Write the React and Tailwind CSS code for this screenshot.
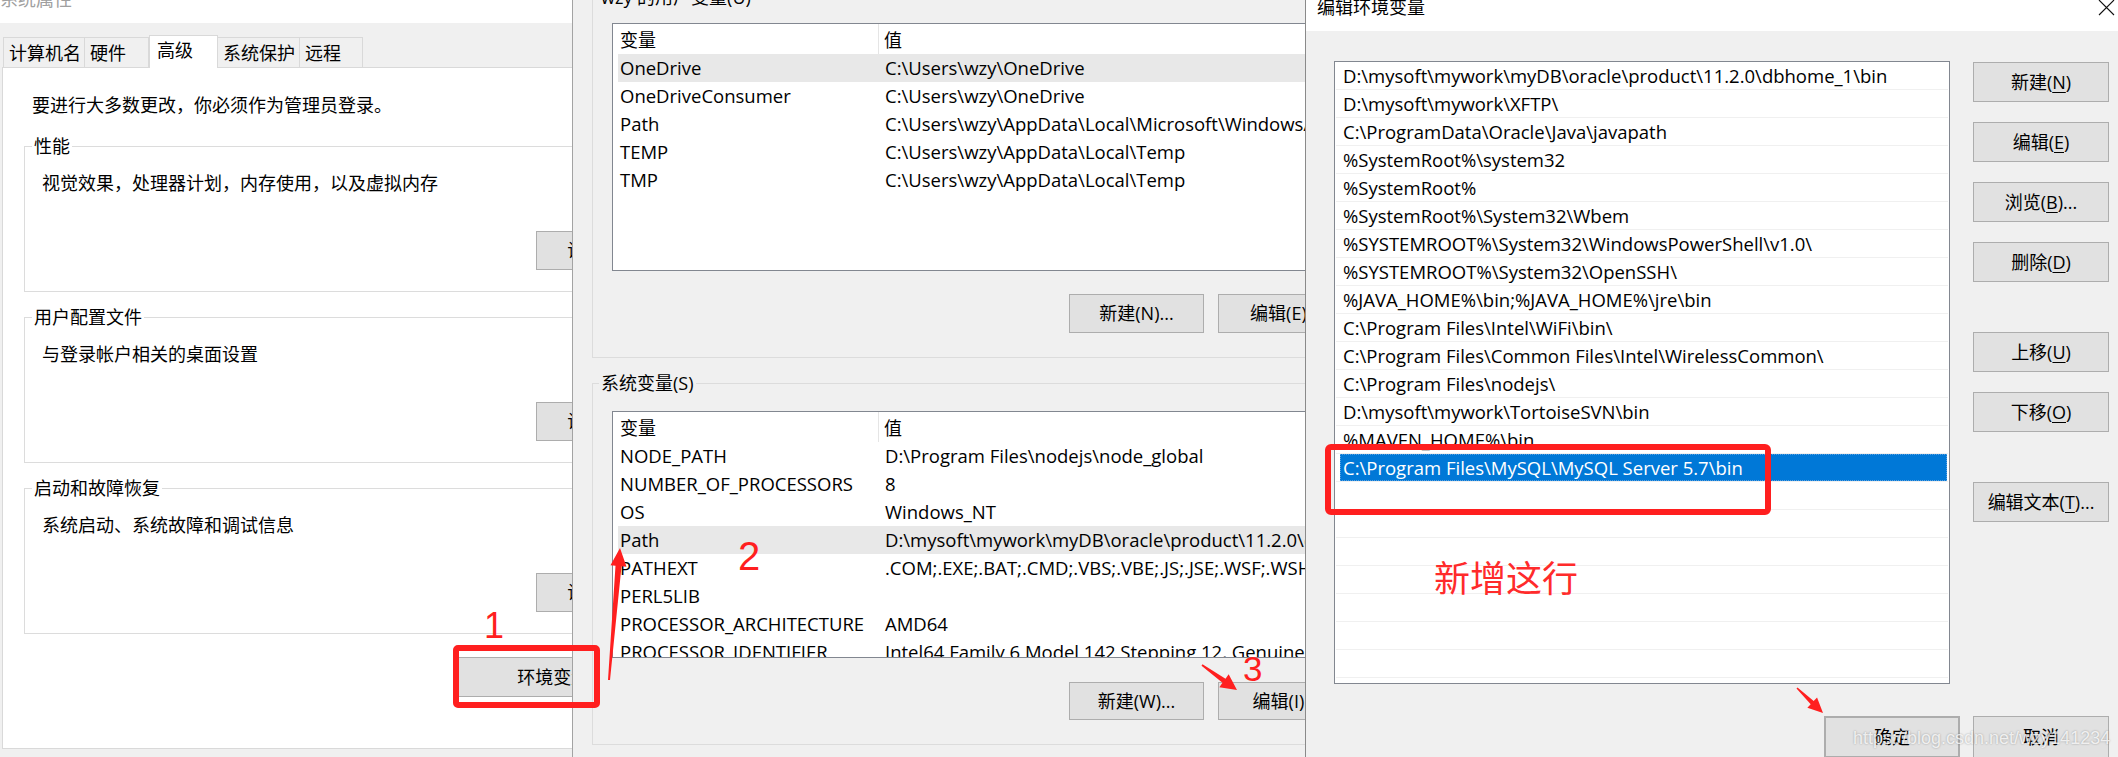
import React from 'react';

const sans = "font-['Open_Sans','Noto_Sans_CJK_SC',sans-serif]";

const Btn = ({ children, className = '' }) => (
  <div
    className={`flex items-center justify-center shrink-0 bg-[#e1e1e1] border border-[#adadad] text-[18px] whitespace-nowrap ${className}`}
  >
    {children}
  </div>
);

const U = ({ children }) => <span className="underline underline-offset-[3px]">{children}</span>;

const Group = ({ title, text, className = '' }) => (
  <fieldset className={`ml-[21px] h-[158px] w-[700px] border border-[#dcdcdc] ${className}`}>
    <legend className="ml-[7px] px-[2px] leading-[24px]">{title}</legend>
    <div className="mt-[13px] pl-[17px] leading-[24px]">{text}</div>
    <Btn className="mt-[36px] ml-[511px] w-[133px] h-[39px]">设置(S)...</Btn>
  </fieldset>
);

function SystemProperties() {
  const tabs = [
    { label: '计算机名', w: 'w-[82px]' },
    { label: '硬件', w: 'w-[65px]' },
    { label: '高级', w: 'w-[69px]', active: true },
    { label: '系统保护', w: 'w-[83px]' },
    { label: '远程', w: 'w-[64px]' },
  ];
  return (
    <div className="w-[572px] shrink-0 h-full overflow-hidden flex flex-col">
      <div className="h-[23px] shrink-0 bg-white overflow-hidden">
        <div className="-mt-[13px] leading-[24px] text-[#a0a0a0]">系统属性</div>
      </div>
      <div className="flex items-end h-[32px] shrink-0 mt-[12px] pl-[3px] relative z-10">
        {tabs.map((t) =>
          t.active ? (
            <div
              key={t.label}
              className={`${t.w} h-[33px] -mb-px bg-white border border-b-0 border-[#d9d9d9] pl-[7px] pt-[2px] leading-[24px]`}
            >
              {t.label}
            </div>
          ) : (
            <div
              key={t.label}
              className={`${t.w} h-[30px] border border-b-0 border-[#d9d9d9] -ml-px first:ml-0 pl-[5px] pt-[3px] leading-[24px]`}
            >
              {t.label}
            </div>
          )
        )}
      </div>
      <div className="ml-[2px] w-[640px] h-[682px] shrink-0 bg-white border border-[#d9d9d9]">
        <div className="pt-[25px] pl-[29px] leading-[24px]">要进行大多数更改，你必须作为管理员登录。</div>
        <Group className="mt-[17px]" title="性能" text="视觉效果，处理器计划，内存使用，以及虚拟内存" />
        <Group className="mt-[13px]" title="用户配置文件" text="与登录帐户相关的桌面设置" />
        <Group className="mt-[13px]" title="启动和故障恢复" text="系统启动、系统故障和调试信息" />
        <Btn className="mt-[23px] ml-[454px] w-[231px] h-[40px]">环境变量(N)...</Btn>
      </div>
    </div>
  );
}

const ListView = ({ rows, hl, className = '' }) => (
  <div className={`bg-white border border-[#828790] overflow-hidden w-[760px] shrink-0 ${className}`}>
    <div className="flex h-[30px] items-center">
      <div className="w-[266px] h-full pl-[7px] pt-[3px] flex items-center border-r border-[#e5e5e5]">变量</div>
      <div className="pl-[5px] pt-[3px]">值</div>
    </div>
    {rows.map(([k, v], i) => (
      <div
        key={k}
        className={`flex h-[28px] items-center ml-[5px] pl-[2px] text-[18.5px] whitespace-nowrap ${
          i === hl ? 'bg-[#e8e8e8]' : ''
        }`}
      >
        <div className="w-[265px] shrink-0">{k}</div>
        <div>{v}</div>
      </div>
    ))}
  </div>
);

function EnvVars() {
  const userVars = [
    ['OneDrive', 'C:\\Users\\wzy\\OneDrive'],
    ['OneDriveConsumer', 'C:\\Users\\wzy\\OneDrive'],
    ['Path', 'C:\\Users\\wzy\\AppData\\Local\\Microsoft\\WindowsApps;'],
    ['TEMP', 'C:\\Users\\wzy\\AppData\\Local\\Temp'],
    ['TMP', 'C:\\Users\\wzy\\AppData\\Local\\Temp'],
  ];
  const sysVars = [
    ['NODE_PATH', 'D:\\Program Files\\nodejs\\node_global'],
    ['NUMBER_OF_PROCESSORS', '8'],
    ['OS', 'Windows_NT'],
    ['Path', 'D:\\mysoft\\mywork\\myDB\\oracle\\product\\11.2.0\\dbhome_1\\bin;'],
    ['PATHEXT', '.COM;.EXE;.BAT;.CMD;.VBS;.VBE;.JS;.JSE;.WSF;.WSH;.MSC'],
    ['PERL5LIB', ''],
    ['PROCESSOR_ARCHITECTURE', 'AMD64'],
    ['PROCESSOR_IDENTIFIER', 'Intel64 Family 6 Model 142 Stepping 12, GenuineIntel'],
  ];
  return (
    <div className="w-[733px] shrink-0 h-full overflow-hidden border-l border-[#a3a3a3]">
      <fieldset className="-mt-[15px] ml-[19px] w-[800px] h-[373px] border border-[#dcdcdc]">
        <legend className="ml-[6px] px-[2px] leading-[24px]">wzy 的用户变量(U)</legend>
        <ListView rows={userVars} hl={0} className="mt-[14px] ml-[19px] h-[248px]" />
        <div className="flex gap-[14px] mt-[23px] ml-[476px]">
          <Btn className="w-[135px] h-[39px]">新建(N)...</Btn>
          <Btn className="w-[135px] h-[39px]">编辑(E)...</Btn>
        </div>
      </fieldset>
      <fieldset className="mt-[13px] ml-[19px] w-[800px] h-[374px] border border-[#dcdcdc]">
        <legend className="ml-[6px] px-[2px] leading-[24px]">系统变量(S)</legend>
        <ListView rows={sysVars} hl={3} className="mt-[16px] ml-[19px] h-[247px]" />
        <div className="flex gap-[14px] mt-[24px] ml-[476px]">
          <Btn className="w-[135px] h-[38px]">新建(W)...</Btn>
          <Btn className="w-[135px] h-[38px]">编辑(I)...</Btn>
        </div>
      </fieldset>
    </div>
  );
}

function EditEnv() {
  const paths = [
    'D:\\mysoft\\mywork\\myDB\\oracle\\product\\11.2.0\\dbhome_1\\bin',
    'D:\\mysoft\\mywork\\XFTP\\',
    'C:\\ProgramData\\Oracle\\Java\\javapath',
    '%SystemRoot%\\system32',
    '%SystemRoot%',
    '%SystemRoot%\\System32\\Wbem',
    '%SYSTEMROOT%\\System32\\WindowsPowerShell\\v1.0\\',
    '%SYSTEMROOT%\\System32\\OpenSSH\\',
    '%JAVA_HOME%\\bin;%JAVA_HOME%\\jre\\bin',
    'C:\\Program Files\\Intel\\WiFi\\bin\\',
    'C:\\Program Files\\Common Files\\Intel\\WirelessCommon\\',
    'C:\\Program Files\\nodejs\\',
    'D:\\mysoft\\mywork\\TortoiseSVN\\bin',
    '%MAVEN_HOME%\\bin',
    'C:\\Program Files\\MySQL\\MySQL Server 5.7\\bin',
  ];
  const rows = [...paths, ...Array(8).fill('')];
  const selected = 14;
  return (
    <div className="flex-1 h-full overflow-hidden border-l border-[#8a8a8a] flex flex-col">
      <div className="h-[31px] shrink-0 bg-white flex justify-between items-start overflow-hidden">
        <div className="-mt-[5px] pl-[11px] leading-[24px]">编辑环境变量</div>
        <svg width="17" height="17" viewBox="0 0 17 17" className="-mt-[1px] mr-[3px]">
          <path d="M1 1 L16 16 M16 1 L1 16" stroke="#111" strokeWidth="1.1" fill="none" />
        </svg>
      </div>
      <div className="flex pl-[28px] pt-[30px]">
        <div className="w-[616px] h-[623px] shrink-0 bg-white border border-[#828790] overflow-hidden">
          {rows.map((p, i) => (
            <div key={i} className="h-[28px] mx-px border-b border-[#f0f0f0]">
              <div
                className={`h-full ml-[4px] mr-px pl-[3px] flex items-center text-[18.5px] whitespace-nowrap ${
                  i === selected
                    ? 'bg-[#0078d7] text-white outline-1 outline-dotted outline-[#5aa0e0] -outline-offset-1'
                    : ''
                }`}
              >
                {p}
              </div>
            </div>
          ))}
        </div>
        <div className="ml-[23px] mt-px flex flex-col">
          <Btn className="w-[136px] h-[40px]">新建(<U>N</U>)</Btn>
          <Btn className="w-[136px] h-[40px] mt-[20px]">编辑(<U>E</U>)</Btn>
          <Btn className="w-[136px] h-[40px] mt-[20px]">浏览(<U>B</U>)...</Btn>
          <Btn className="w-[136px] h-[40px] mt-[20px]">删除(<U>D</U>)</Btn>
          <Btn className="w-[136px] h-[40px] mt-[50px]">上移(<U>U</U>)</Btn>
          <Btn className="w-[136px] h-[40px] mt-[20px]">下移(<U>O</U>)</Btn>
          <Btn className="w-[136px] h-[40px] mt-[50px]">编辑文本(<U>T</U>)...</Btn>
        </div>
      </div>
      <div className="flex gap-[13px] pl-[518px] mt-[32px]">
        <Btn className="w-[136px] h-[42px] border-2 border-[#0078d7]">确定</Btn>
        <Btn className="w-[136px] h-[42px]">取消</Btn>
      </div>
    </div>
  );
}

export default function App() {
  return (
    <div className={`relative w-[2118px] h-[757px] overflow-hidden flex bg-[#f0f0f0] text-black text-[18px] ${sans}`}>
      <SystemProperties />
      <EnvVars />
      <EditEnv />

      {/* annotations drawn over the screenshot */}
      <div className="absolute left-[453px] top-[645px] w-[147px] h-[63px] border-[6px] border-[#ff1f1f] rounded-[5px]" />
      <div className="absolute left-[1325px] top-[444px] w-[446px] h-[71px] border-[6px] border-[#ff1f1f] rounded-[6px]" />
      <div className="absolute left-[484px] top-[604px] text-[36px] leading-[44px] text-[#ff1f1f] font-['Liberation_Sans',sans-serif]">1</div>
      <div className="absolute left-[738px] top-[532px] text-[40px] leading-[48px] text-[#ff1f1f] font-['Liberation_Sans',sans-serif]">2</div>
      <div className="absolute left-[1243px] top-[648px] text-[35px] leading-[42px] text-[#ff1f1f] font-['Liberation_Sans',sans-serif]">3</div>
      <div className="absolute left-[1434px] top-[552px] text-[36px] leading-[48px] text-[#ff2b2b] font-['Noto_Sans_CJK_SC',sans-serif]">新增这行</div>
      <svg className="absolute inset-0 pointer-events-none" width="2118" height="757">
        <polygon fill="#ff1f1f" points="620,548 626.5,566.7 621.5,566.2 610,680.1 608,679.9 615.5,565.75 610.5,565.3" />
        <polygon fill="#ff1f1f" points="1237,690 1228.65,674.2 1225.5,678.7 1202.5,664.35 1201.5,665.65 1222.5,682.7 1219.35,687.2" />
        <polygon fill="#ff1f1f" points="1823,713 1817.05,697.55 1813.7,701 1797.5,687.5 1796.5,688.5 1810.7,704.2 1807.35,707.65" />
      </svg>
      <div className="absolute left-[1853px] top-[726px] text-[18px] leading-[24px] text-white/80 font-['Liberation_Sans',sans-serif] [text-shadow:0_0_2px_rgba(0,0,0,0.35)]">
        https://blog.csdn.net/wzy141234
      </div>
    </div>
  );
}
